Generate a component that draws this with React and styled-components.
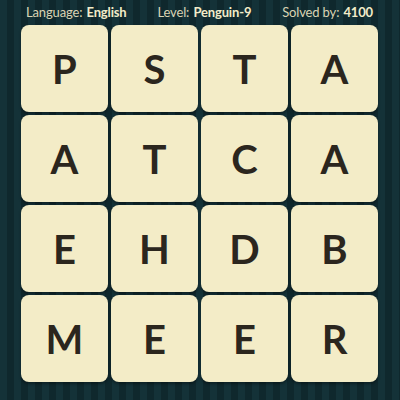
import styled, { createGlobalStyle } from "styled-components";

const GlobalStyle = createGlobalStyle`
  html, body {
    margin: 0;
    padding: 0;
  }
  body {
    font-family: Lato, "Open Sans", sans-serif;
  }
`;

const rows = ["PSTA", "ATCA", "EHDB", "MEER"];

export default function App() {
  return (
    <>
      <GlobalStyle />
      <Page>
        <Header>
          <Info>
            Language: <b>English</b>
          </Info>
          <Info>
            Level: <b>Penguin-9</b>
          </Info>
          <Info>
            Solved by: <b>4100</b>
          </Info>
        </Header>
        <Board>
          {rows.map((row, r) =>
            row.split("").map((ch, c) => <Tile key={`${r}-${c}`}>{ch}</Tile>)
          )}
        </Board>
      </Page>
    </>
  );
}

/********************* styled component *************************/
const Page = styled.div`
  width: 400px;
  height: 400px;
  box-sizing: border-box;
  overflow: hidden;
  background-color: #112c31;
  background-image: repeating-linear-gradient(
    90deg,
    #143238 0px,
    #143238 7px,
    #0f282d 7px,
    #0f282d 14px
  );
  display: flex;
  flex-direction: column;
  padding: 0 21px;
`;

const Header = styled.div`
  height: 25px;
  display: flex;
  align-items: center;
  justify-content: space-between;
  padding: 0 6px 2px 5px;
  box-sizing: border-box;
`;

const Info = styled.span`
  color: #d9d4b4;
  font-size: 13px;
  letter-spacing: -0.15px;

  b {
    color: #f2ecc9;
    font-weight: 700;
    margin-left: 1px;
  }
`;

const Board = styled.div`
  display: grid;
  grid-template-columns: repeat(4, 87px);
  grid-auto-rows: 87px;
  gap: 3px;
`;

const Tile = styled.div`
  background: #f3ecc7;
  border-radius: 8px;
  box-shadow: 0 2px 3px rgba(0, 0, 0, 0.35);
  display: flex;
  align-items: center;
  justify-content: center;
  color: #2b261e;
  font-size: 40px;
  font-weight: 700;
  font-family: Lato, "Open Sans", sans-serif;
  padding-top: 1px;
`;
